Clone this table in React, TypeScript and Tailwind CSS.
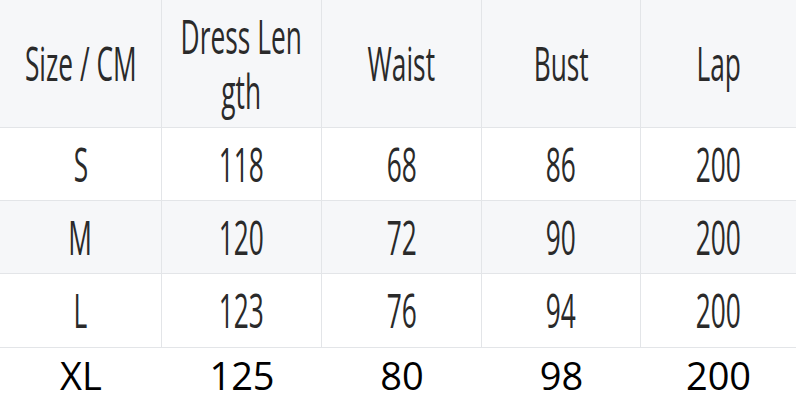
const headers = ['Size / CM', 'Dress Len\ngth', 'Waist', 'Bust', 'Lap']

const rows = [
  { cells: ['S', '118', '68', '86', '200'], shaded: false, h: 'h-[73px]' },
  { cells: ['M', '120', '72', '90', '200'], shaded: true, h: 'h-[73px]' },
  { cells: ['L', '123', '76', '94', '200'], shaded: false, h: 'h-[74px]' },
]

const extra = ['XL', '125', '80', '98', '200']

const cols = 'grid grid-cols-[162px_160px_160px_159px_155px]'

function Text({ children }: { children: string }) {
  return (
    <span className="inline-block origin-center scale-x-[0.56] whitespace-pre text-center font-['Open_Sans',sans-serif] text-[47px] leading-[55px] text-[#2a2a2a]">
      {children}
    </span>
  )
}

export default function App() {
  return (
    <div className="h-[411px] w-[796px] overflow-hidden bg-white">
      {/* Header */}
      <div className={`${cols} h-[128px] border-b border-[#e3e5e8] bg-[#f6f7f9]`}>
        {headers.map((h, i) => (
          <div
            key={h}
            className={`flex items-center justify-center ${i < 4 ? 'border-r border-[#e3e5e8]' : ''}`}
          >
            <Text>{h}</Text>
          </div>
        ))}
      </div>

      {/* Body rows */}
      {rows.map((row) => (
        <div
          key={row.cells[0]}
          className={`${cols} ${row.h} border-b border-[#e3e5e8] ${row.shaded ? 'bg-[#f6f7f9]' : 'bg-white'}`}
        >
          {row.cells.map((c, i) => (
            <div
              key={i}
              className={`flex items-center justify-center ${i < 4 ? 'border-r border-[#e3e5e8]' : ''}`}
            >
              <Text>{c}</Text>
            </div>
          ))}
        </div>
      ))}

      {/* XL row, plain */}
      <div className={`${cols} h-[63px] items-start pt-[3px]`}>
        {extra.map((c, i) => (
          <div key={i} className="flex justify-center">
            <span className="font-['Open_Sans',sans-serif] text-[38px] leading-[48px] text-black">{c}</span>
          </div>
        ))}
      </div>
    </div>
  )
}
